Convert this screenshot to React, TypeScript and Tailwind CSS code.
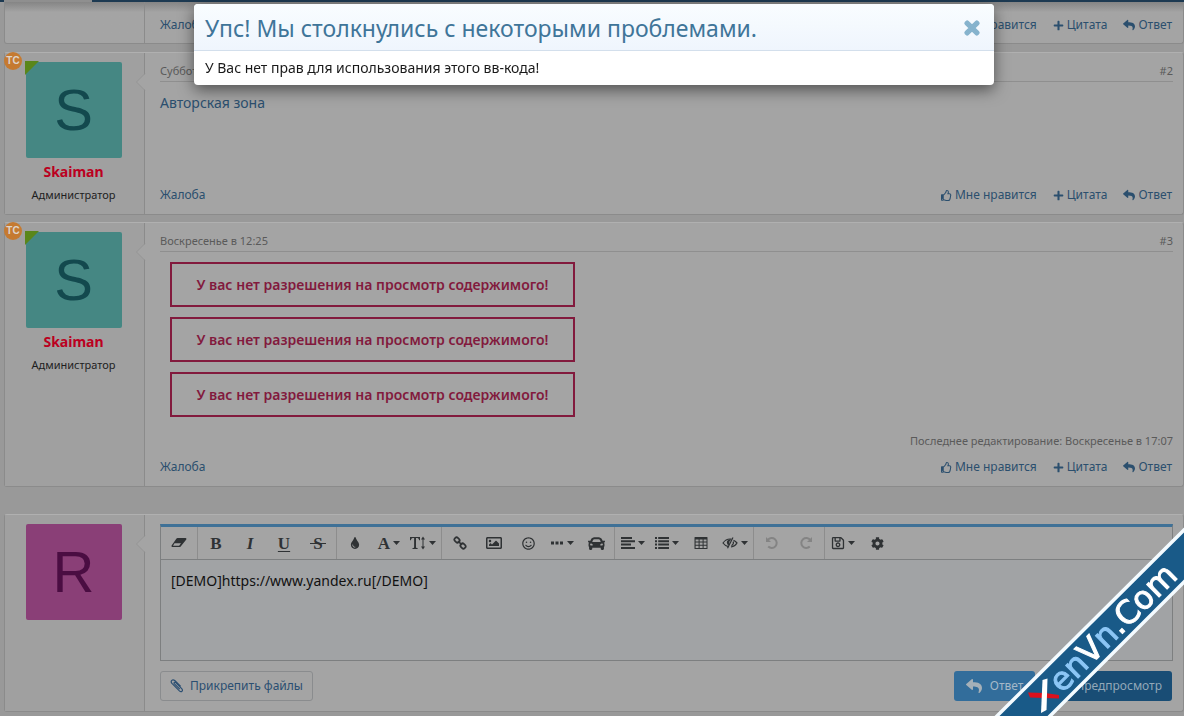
import type { ReactNode } from "react";
import {
  FaCar,
  FaCog,
  FaEye,
  FaPlus,
  FaRegImage,
  FaRegSave,
  FaRegSmile,
  FaRegThumbsUp,
  FaReply,
  FaTimes,
  FaTint,
} from "react-icons/fa";

const link = "text-[#2b4f6e] hover:underline";

function PostActions() {
  const item = "flex items-center gap-[3px] " + link;
  return (
    <div className="flex h-5 items-center justify-between pr-px text-[12px] leading-5">
      <a href="#report" className={link}>
        Жалоба
      </a>
      <div className="flex items-center gap-4">
        <a href="#like" className={item}>
          <FaRegThumbsUp className="size-[11px]" />
          Мне нравится
        </a>
        <a href="#quote" className={item}>
          <FaPlus className="size-[11px]" />
          Цитата
        </a>
        <a href="#reply" className={item}>
          <FaReply className="size-3" />
          Ответ
        </a>
      </div>
    </div>
  );
}

function Avatar({ letter, tone, online }: { letter: string; tone: string; online?: boolean }) {
  return (
    <div
      className={
        "relative flex size-24 items-center justify-center rounded-xs font-['Liberation_Sans',Arial,sans-serif] text-[58px] leading-none " +
        tone
      }
    >
      {letter}
      {online && (
        <svg className="absolute -top-px -left-px size-[14px]" viewBox="0 0 14 14" aria-hidden="true">
          <path d="M0 0H14L0 14Z" fill="#5a861b" />
        </svg>
      )}
    </div>
  );
}

function Notch() {
  return (
    <svg className="absolute top-5 -left-[9px] h-[18px] w-[10px]" viewBox="0 0 10 18" aria-hidden="true">
      <path d="M10 0L1 9L10 18Z" fill="#a4a4a4" />
      <path d="M9 0.500L0.500 9L9 17.500" fill="none" stroke="#959595" />
    </svg>
  );
}

function Panel({ side, badge, children }: { side: ReactNode; badge?: boolean; children: ReactNode }) {
  return (
    <article className="relative flex rounded-[3px] border border-[#8b8b8b] border-t-[#b0b0b0] bg-[#a4a4a4]">
      {badge && (
        <span className="absolute -top-px -left-px flex size-[18px] items-center justify-center rounded-full bg-[#c57a31] font-['Liberation_Sans',Arial,sans-serif] text-[10px] leading-none font-bold text-[#ded5cb]">
          TC
        </span>
      )}
      <div className="flex w-[140px] shrink-0 flex-col items-center border-r border-[#8b8b8b] bg-[#a0a0a0] pt-[9px] pr-0.5">
        {side}
      </div>
      <div className="relative flex min-w-0 grow flex-col pr-[10px] pl-[15px]">
        <Notch />
        {children}
      </div>
    </article>
  );
}

function Author() {
  return (
    <>
      <Avatar letter="S" tone="bg-[#458783] text-[#13494e]" online />
      <a href="#skaiman" className="mt-1 text-[14px] leading-5 font-bold text-[#bb0020]">
        Skaiman
      </a>
      <p className="mt-[3px] text-[11px] leading-5 text-[#1e1e1e]">Администратор</p>
    </>
  );
}

function Post({ date, num, children }: { date: string; num: string; children: ReactNode }) {
  return (
    <Panel side={<Author />} badge>
      <header className="mt-2 flex justify-between border-b border-[#8f8f8f] text-[11px] leading-5 text-[#5a5a5a]">
        <span>{date}</span>
        <a href="#post">{num}</a>
      </header>
      <div className="flex min-h-[103px] flex-col">{children}</div>
      <div className="pb-[9px]">
        <PostActions />
      </div>
    </Panel>
  );
}

function Denied() {
  return (
    <p className="flex h-[45px] w-[405px] max-w-full items-center justify-center border-2 border-[#821a3d] text-[14px] font-semibold text-[#821a3d]">
      У вас нет разрешения на просмотр содержимого!
    </p>
  );
}

function Glyph({ children, wide }: { children: ReactNode; wide?: boolean }) {
  return (
    <svg
      className={wide ? "h-[14px] w-4" : "size-[14px]"}
      viewBox={wide ? "0 0 16 14" : "0 0 14 14"}
      fill="currentColor"
      aria-hidden="true"
    >
      {children}
    </svg>
  );
}

const Eraser = () => (
  <Glyph wide>
    <path
      fillRule="evenodd"
      d="M6.500 2H14.600Q15.900 2.200 15.300 3.400L9.700 10.400Q9.200 11 8.400 11H1.200Q0 10.700 0.600 9.500L5.500 2.600Q5.900 2 6.500 2ZM3.500 7.300L2 9.800H8.100L10 7.300Z"
    />
  </Glyph>
);
const TextHeight = () => (
  <Glyph wide>
    <path d="M0 1H10V4.200H9.200Q8.900 2.300 7.500 2.100H6V11.200Q6.100 12 7.600 12.100V13H2.500V12.100Q4 12 4.100 11.200V2.100H2.500Q1.100 2.300 0.800 4.200H0ZM13 0.500L15 3.500H13.500V10.500H15L13 13.500L11 10.500H12.500V3.500H11Z" />
  </Glyph>
);
const Chain = () => (
  <Glyph>
    <g fill="none" stroke="currentColor" strokeWidth="1.700">
      <rect x="-2.700" y="-2.100" width="5.400" height="4.200" rx="1.800" transform="translate(4 4) rotate(45)" />
      <rect x="-2.700" y="-2.100" width="5.400" height="4.200" rx="1.800" transform="translate(10 10) rotate(45)" />
      <path d="M5 5L9 9" />
    </g>
  </Glyph>
);
const Dots = () => (
  <Glyph>
    <path d="M1 5.500h3v3H1zM5.500 5.500h3v3h-3zM10 5.500h3v3h-3z" />
  </Glyph>
);
const AlignLeft = () => (
  <Glyph>
    <path d="M0 1h11v2H0zM0 4.300h14v2H0zM0 7.600h10v2H0zM0 10.900h14v2H0z" />
  </Glyph>
);
const Listing = () => (
  <Glyph>
    <path d="M0 1h2v2H0zM0 4.300h2v2H0zM0 7.600h2v2H0zM0 10.900h2v2H0zM3.200 1H14v2H3.200zM3.200 4.300H14v2H3.200zM3.200 7.600H14v2H3.200zM3.200 10.900H14v2H3.200z" />
  </Glyph>
);
const Table = () => (
  <Glyph>
    <path
      fillRule="evenodd"
      d="M1 1H13Q13.500 1 13.500 1.500V12.500Q13.500 13 13 13H1Q0.500 13 0.500 12.500V1.500Q0.500 1 1 1ZM1.600 3.600V5.600H4.600V3.600ZM5.600 3.600V5.600H8.600V3.600ZM9.600 3.600V5.600H12.500V3.600ZM1.600 6.600V8.700H4.600V6.600ZM5.600 6.600V8.700H8.600V6.600ZM9.600 6.600V8.700H12.500V6.600ZM1.600 9.700V12H4.600V9.700ZM5.600 9.700V12H8.600V9.700ZM9.600 9.700V12H12.500V9.700Z"
    />
  </Glyph>
);
const EyeSlash = () => (
  <Glyph wide>
    <g fill="none" stroke="currentColor" strokeWidth="1.200">
      <path d="M6.500 10.700Q3 9.900 1 7Q3.800 3 8 3L9.500 3.200M11.500 4.300Q13.700 5.400 15 7Q13 10.400 9 11" />
      <path d="M11 1.500L5.500 12.300" />
      <path d="M11.300 5.500Q12 8 9.500 9.700" />
    </g>
    <path d="M8.800 3.500Q4.800 3.500 4.800 6.500Q5 8.500 6.500 9.400L7.500 7.300Q6.500 5.300 8.400 4.700Z" />
  </Glyph>
);
const Turn = ({ forward }: { forward?: boolean }) => (
  <svg
    className={forward ? "size-[14px] -scale-x-100" : "size-[14px]"}
    viewBox="0 0 14 14"
    aria-hidden="true"
  >
    <path d="M2.800 3.800A5 5 0 1 1 3.200 10.500" fill="none" stroke="currentColor" strokeWidth="2" />
    <path d="M1 1V6H6Z" fill="currentColor" />
  </svg>
);
const Clip = () => (
  <svg className="size-[14px]" viewBox="0 0 14 14" fill="none" stroke="currentColor" aria-hidden="true">
    <path
      d="M9.800 10.200L4.500 4.900Q3.600 4.200 4.300 3.500Q5 2.900 5.800 3.700L11.700 9.600Q13 11.100 12 12.200Q10.800 13.200 9.400 11.900L2.200 4.700Q0.400 2.700 1.800 1.400Q3.200 0.200 5 1.800L10.700 7.500"
      strokeWidth="1.200"
    />
  </svg>
);

const serif = "font-['Liberation_Serif',serif] text-[17px] leading-none font-bold ";

type Tool = { label: string; icon: ReactNode; menu?: boolean; off?: boolean };

const groups: Tool[][] = [
  [{ label: "Убрать форматирование", icon: <Eraser /> }],
  [
    { label: "Жирный", icon: <span className={serif}>B</span> },
    { label: "Курсив", icon: <span className={serif + "italic"}>I</span> },
    { label: "Подчёркнутый", icon: <span className={serif + "underline underline-offset-2"}>U</span> },
    {
      label: "Зачёркнутый",
      icon: (
        <span className={serif + "relative"}>
          S
          <span className="absolute inset-x-[-3px] top-1/2 h-px bg-current" />
        </span>
      ),
    },
  ],
  [
    { label: "Цвет текста", icon: <FaTint className="size-3" /> },
    { label: "Шрифт", icon: <span className={serif}>A</span>, menu: true },
    { label: "Размер", icon: <TextHeight />, menu: true },
  ],
  [
    { label: "Ссылка", icon: <Chain /> },
    { label: "Изображение", icon: <FaRegImage className="size-4" /> },
    { label: "Смайлы", icon: <FaRegSmile className="size-[13px]" /> },
    { label: "Вставить", icon: <Dots />, menu: true },
    { label: "Автомобиль", icon: <FaCar className="size-[17px]" /> },
  ],
  [
    { label: "Выравнивание", icon: <AlignLeft />, menu: true },
    { label: "Список", icon: <Listing />, menu: true },
    { label: "Таблица", icon: <Table /> },
    { label: "Скрытый текст", icon: <EyeSlash />, menu: true },
  ],
  [
    { label: "Отменить", icon: <Turn />, off: true },
    { label: "Повторить", icon: <Turn forward />, off: true },
  ],
  [
    { label: "Черновики", icon: <FaRegSave className="size-[14px]" />, menu: true },
    { label: "Настройки", icon: <FaCog className="size-[13px]" /> },
  ],
];

function Toolbar() {
  return (
    <div className="flex h-[33px] border-b border-[#7d7f80]">
      {groups.map((tools, i) => (
        <div key={i} className="flex border-r border-[#8d8d8d] px-px last:border-r-0">
          {tools.map((t) => (
            <button
              key={t.label}
              type="button"
              aria-label={t.label}
              disabled={t.off}
              className={
                "flex w-[34px] items-center justify-center gap-[3px] " + (t.off ? "text-[#848484]" : "text-[#2f3234]")
              }
            >
              {t.icon}
              {t.menu && (
                <svg className="h-1 w-[7px] shrink-0" viewBox="0 0 7 4" aria-hidden="true">
                  <path d="M0 0H7L3.500 4Z" fill="currentColor" />
                </svg>
              )}
            </button>
          ))}
        </div>
      ))}
    </div>
  );
}

function Editor() {
  return (
    <Panel side={<Avatar letter="R" tone="bg-[#8a3f77] text-[#4a0d42]" />}>
      <form className="flex flex-col pt-[9px] pb-[10px]">
        <div className="flex flex-col border border-t-3 border-[#7d7f80] border-t-[#3f7197]">
          <Toolbar />
          <textarea
            aria-label="Сообщение"
            defaultValue="[DEMO]https://www.yandex.ru[/DEMO]"
            className="h-[100px] w-full resize-none bg-[#a1a3a5] px-[10px] py-[10px] text-[14px] leading-[22px] text-[#111] outline-none"
          />
        </div>
        <div className="mt-[10px] flex items-center justify-between pr-px text-[12px]">
          <button
            type="button"
            className="flex h-[30px] items-center gap-[6px] rounded-[3px] border border-[#8a8c8e] px-[9px] text-[#2b4f72]"
          >
            <Clip />
            Прикрепить файлы
          </button>
          <div className="flex gap-1">
            <button
              type="button"
              className="flex h-[30px] items-center gap-2 rounded-[3px] bg-[#326d9b] px-3 text-[#a5b8c8]"
            >
              <FaReply className="size-4 text-[#a5b0b8]" />
              Ответ
            </button>
            <button
              type="button"
              className="flex h-[30px] items-center gap-2 rounded-[3px] bg-[#194d75] pr-[10px] pl-3 text-[#93a8b8]"
            >
              <FaEye className="size-4" />
              Предпросмотр
            </button>
          </div>
        </div>
      </form>
    </Panel>
  );
}

function Ribbon() {
  return (
    <svg
      className="pointer-events-none fixed right-0 bottom-0 size-[190px]"
      viewBox="0 0 190 190"
      role="img"
      aria-label="XenVn.Com"
    >
      <path d="M0 192L192 1V53L53 192Z" fill="#195a88" />
      <path d="M0 193L192 2M53 193L192 54" stroke="#f4fbff" strokeWidth="3.500" />
      <path d="M34 166.500L51 167L65 169V172.500L50 172L36 171.500Z" fill="#dc101c" />
      <path d="M48.500 154L53.500 152.500L52.500 184L47 187Z" fill="#fff" />
      <text
        transform="translate(68 168) rotate(-45)"
        className="font-['DejaVu_Sans'] text-[32px]"
        fill="#fff"
        stroke="#fff"
        strokeWidth="1"
      >
        <tspan fill="#8cc6f5" stroke="#8cc6f5">
          en
        </tspan>
        V
        <tspan fill="#8cc6f5" stroke="#8cc6f5">
          n
        </tspan>
        .Com
      </text>
    </svg>
  );
}

function ErrorDialog() {
  return (
    <div className="fixed inset-x-0 top-1 flex justify-center pl-1">
      <section
        role="dialog"
        aria-labelledby="error-title"
        className="w-[800px] max-w-full overflow-hidden rounded-[4px] bg-white shadow-[0_5px_15px_rgba(0,0,0,0.5)]"
      >
        <header className="flex h-[47px] items-center justify-between border-b border-[#d3dfec] bg-linear-to-b from-[#f9fdff] to-[#eff5fd] pt-0.5 pr-3 pl-[11px]">
          <h1 id="error-title" className="text-[23px] text-[#3f7599]">
            Упс! Мы столкнулись с некоторыми проблемами.
          </h1>
          <button type="button" aria-label="Закрыть" className="text-[#86b3cd]">
            <FaTimes className="size-5" stroke="currentColor" strokeWidth="40" />
          </button>
        </header>
        <p className="px-[11px] py-[6px] text-[14px] leading-[22px] text-[#1a1a1a]">
          У Вас нет прав для использования этого вв-кода!
        </p>
      </section>
    </div>
  );
}

export default function App() {
  return (
    <div className="min-h-screen bg-[#999] font-['Noto_Sans','Open_Sans',sans-serif]">
      <nav className="flex h-[2px] bg-[#1d3a52]" aria-label="Разделы">
        <span className="ml-1 w-[88px] bg-[#8f8f8f]" />
      </nav>
      <main className="pl-1">
        <article className="flex h-[42px] rounded-b-[3px] border border-t-0 border-[#8b8b8b] bg-linear-to-b from-[#858585] from-0% to-[#a4a4a4] to-25%">
          <div className="w-[140px] shrink-0 border-r border-[#8b8b8b]" />
          <div className="grow pt-[13px] pr-[10px] pl-[15px]">
            <PostActions />
          </div>
        </article>
        <div className="mt-2 flex flex-col gap-[7px]">
          <Post date="Суббота" num="#2">
            <p className="pt-3 text-[14px] leading-[18px]">
              <a href="#zone" className={link}>
                Авторская зона
              </a>
            </p>
          </Post>
          <Post date="Воскресенье в 12:25" num="#3">
            <div className="flex flex-col gap-[10px] px-[10px] pt-[10px]">
              <Denied />
              <Denied />
              <Denied />
            </div>
            <p className="mt-[15px] mb-[7px] text-right text-[11px] leading-[18px] text-[#5a5a5a]">
              Последнее редактирование: Воскресенье в 17:07
            </p>
          </Post>
        </div>
        <div className="mt-[27px] pb-1">
          <Editor />
        </div>
      </main>
      <ErrorDialog />
      <Ribbon />
    </div>
  );
}
